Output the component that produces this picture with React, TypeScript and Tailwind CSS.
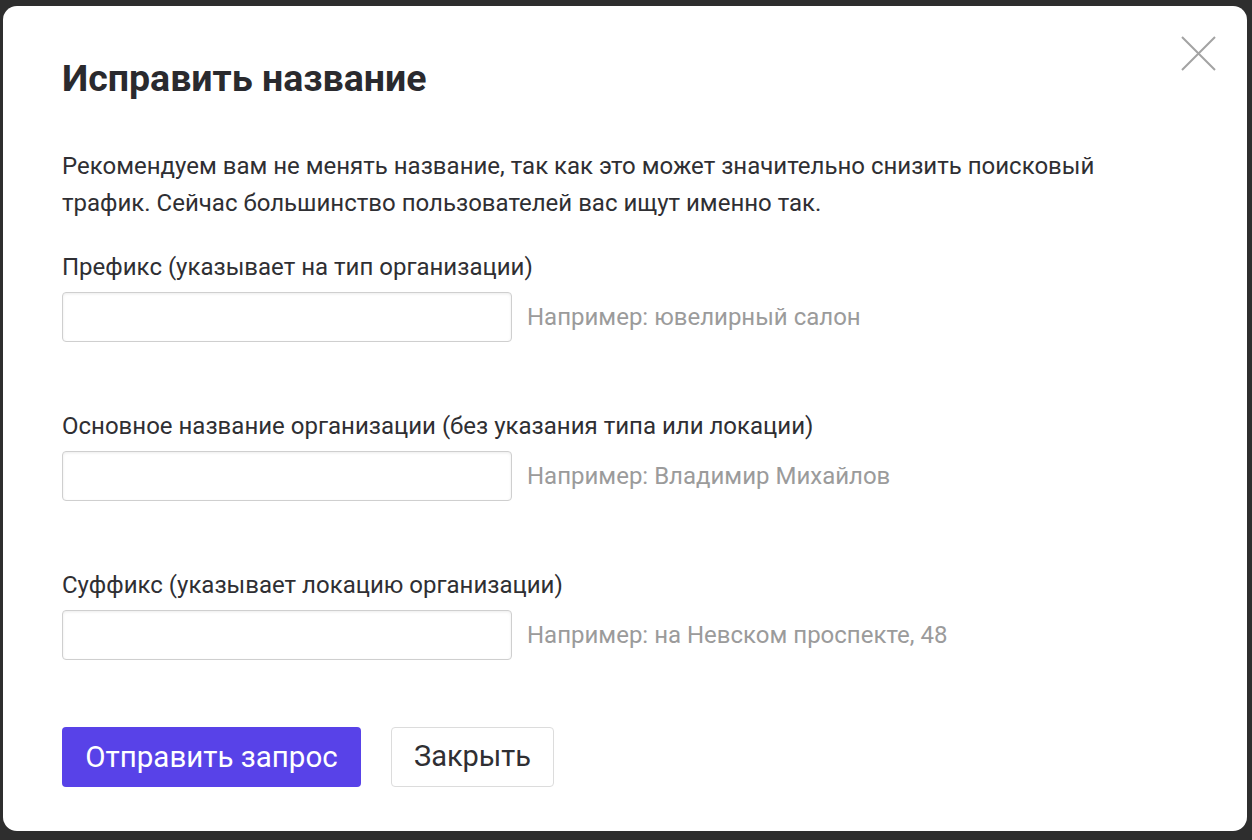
import React from "react";

const font = { fontFamily: "Roboto, 'Noto Sans', Arial, sans-serif" };

function Field({ label, hint }: { label: string; hint: string }) {
  return (
    <div className="flex flex-col">
      <div className="text-[24px] leading-[30px] text-[#2f2f33]">{label}</div>
      <div className="mt-[10px] flex items-center">
        <input
          className="h-[50px] w-[450px] rounded-[4px] border border-[#cfcfcf] bg-white shadow-[inset_0_1px_3px_rgba(0,0,0,0.08)] outline-none"
          type="text"
        />
        <span className="ml-[15px] text-[24px] leading-[30px] text-[#9b9b9b]">{hint}</span>
      </div>
    </div>
  );
}

export default function App() {
  return (
    <div className="h-[840px] w-[1252px] overflow-hidden bg-[#2e2e2e] pl-[3px] pt-[6px]" style={font}>
      <div className="relative h-[825px] w-[1244px] rounded-[14px] bg-white pl-[59px] pt-[52px]">
        <svg
          className="absolute right-[31px] top-[30px]"
          width="35"
          height="35"
          viewBox="0 0 35 35"
          fill="none"
        >
          <path d="M1 1L34 34M34 1L1 34" stroke="#a3a3a3" strokeWidth="2" />
        </svg>
        <h1 className="text-[37.5px] font-bold leading-[40px] text-[#2a2a2e]">Исправить название</h1>
        <p className="mt-[50px] w-[1090px] text-[24px] leading-[37px] text-[#2f2f33]">
          Рекомендуем вам не менять название, так как это может значительно снизить поисковый трафик.
          Сейчас большинство пользователей вас ищут именно так.
        </p>
        <div className="mt-[30px] flex flex-col gap-[69px]">
          <Field label="Префикс (указывает на тип организации)" hint="Например: ювелирный салон" />
          <Field
            label="Основное название организации (без указания типа или локации)"
            hint="Например: Владимир Михайлов"
          />
          <Field label="Суффикс (указывает локацию организации)" hint="Например: на Невском проспекте, 48" />
        </div>
        <div className="mt-[67px] flex gap-[30px]">
          <button className="h-[60px] w-[299px] rounded-[4px] bg-[#5842e8] text-[29.5px] text-white">
            Отправить запрос
          </button>
          <button className="h-[60px] w-[163px] rounded-[4px] border border-[#dcdcdc] bg-white text-[29px] text-[#2f2f33]">
            Закрыть
          </button>
        </div>
      </div>
    </div>
  );
}
